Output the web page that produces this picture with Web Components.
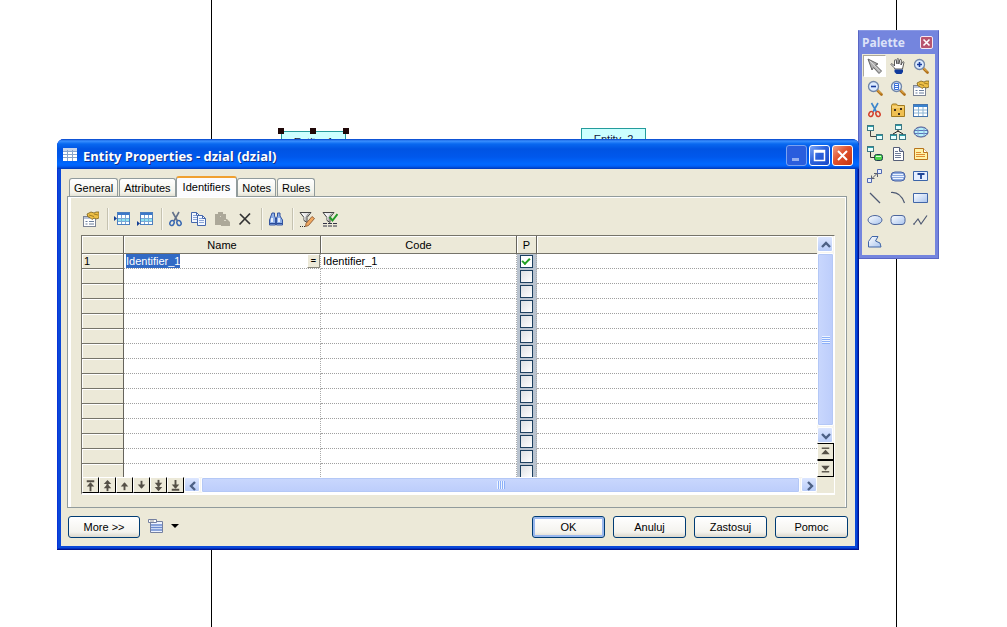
<!DOCTYPE html>
<html lang="pl">
<head>
<meta charset="utf-8">
<title>Entity Properties</title>
<style>
  html, body { margin: 0; height: 100%; }
  body { font: 11px/15px "Liberation Sans", Arial, sans-serif; color: #000; background: #fff; overflow: hidden; }
</style>
</head>
<body>
<diagram-desktop>
  <entity-node class="first" selected>Entity_1</entity-node>
  <entity-node class="second">Entity_2</entity-node>
  <tool-palette heading="Palette"></tool-palette>
  <xp-window heading="Entity Properties - dzial (dzial)">
    <tab-strip tabs="General,Attributes,Identifiers,Notes,Rules" active="Identifiers">
      <tool-bar></tool-bar>
      <identifier-grid></identifier-grid>
    </tab-strip>
    <xp-button slot="left">More &gt;&gt;</xp-button>
    <menu-button slot="left"></menu-button>
    <xp-button slot="right" primary>OK</xp-button>
    <xp-button slot="right">Anuluj</xp-button>
    <xp-button slot="right">Zastosuj</xp-button>
    <xp-button slot="right">Pomoc</xp-button>
  </xp-window>
</diagram-desktop>

<script>
const box = (x, y, w = 6, h = 5) => `<rect x="${x}.5" y="${y}.5" width="${w}" height="${h}" fill="#e8ffff" stroke="#3f7884"/><path d="M${x + 1} ${y + 1}h${w - 1}v1h-${w - 1}z" fill="#28a0a8"/>`;
const lens = inner => `<path d="M10 10l4.500 4.500" stroke="#b07018" stroke-width="2.600" stroke-linecap="round"/><path d="M10.500 10l3.500 3.500" stroke="#f0c060"/><circle cx="6.500" cy="6.500" r="5" fill="#dcebff" stroke="#7186a8" stroke-width="1.300"/>${inner}`;
const props = `<rect x=".5" y="5.500" width="12" height="10" fill="#fff" stroke="#7c8494"/><path d="M1 6h11v2H1z" fill="#b8c2d8"/><path d="M2.500 10.500h2M6 10.500h5M2.500 13h2M6 13h5" stroke="#6b7f9c"/><path d="M4 3l4-2 3 1 2-1h3v6l-3 1-2-1-2 1.500L7 6.500 5 6z" fill="#eebf45" stroke="#79601c" stroke-width=".8"/><path d="M6 4l5 1.500M11 3l4 1" stroke="#8e6e18" stroke-width=".8"/>`;
const funnel = `<path d="M1 1.500h11L8 6.500v5l-3-2v-3z" fill="#e8e8e8" stroke="#444"/><path d="M3 2l3 3.500v3.500" fill="none" stroke="#fff"/><path d="M9.500 2.500L7 6v4" fill="none" stroke="#888"/>`;
const insertTable = marker => `<rect x="3.500" y="1.500" width="12" height="12" fill="#fff" stroke="#4d7fbe"/><path d="M4 2h11v2H4z" fill="#3c78c8"/><path d="M4 8h11v3H4z" fill="#8be4f0"/><path d="M7.500 4v9M11.500 4v9M4 7.500h11M4 10.500h11" stroke="#7aa8d6"/>${marker}`;
const cutter = (blade, ring) => `<path d="M4.500 1l5 9M11 1L6 10" stroke="${blade}" stroke-width="1.600"/><ellipse cx="4" cy="12" rx="2" ry="2.600" transform="rotate(25 4 12)" fill="none" stroke="${ring}" stroke-width="1.500"/><ellipse cx="11" cy="12" rx="2" ry="2.600" transform="rotate(-25 11 12)" fill="none" stroke="${ring}" stroke-width="1.500"/>`;
const defs = `<defs><linearGradient id="f" x1="0" y1="0" x2="1" y2="1"><stop stop-color="#fff"/><stop offset="1" stop-color="#a9c4ee"/></linearGradient></defs>`;
const sheet = (x, y) => `<path d="M${x} ${y}h5l3 3v7h-8z" fill="#f4f8ff" stroke="#4769ad"/><path d="M${x + 5} ${y}v3h3" fill="none" stroke="#4769ad"/><path d="M${x + 1.500} ${y + 3}h3M${x + 1.500} ${y + 5}h5M${x + 1.500} ${y + 7}h5" stroke="#8ba6d8"/>`;

const ICONS = {
  pointer: `<path d="M1 1l10 5-2.500 1 6 6-2.500 2.500-5.500-6L5 12z" fill="#b0b0b0" stroke="#666"/><path d="M3 3l10 10.500" stroke="#ddd"/>`,
  hand: `<path d="M4 9.500L1 6.500c0-1 1-1 1.500-.5L4.500 8V2.500c0-1 1.500-1 1.700 0L7 6V1.500c0-1.200 1.700-1.200 1.800 0V6l1-4c.3-1 1.700-.7 1.600.3L11 7l1.500-3c.5-.8 1.700-.3 1.400.6L12.500 11H5z" fill="#fff" stroke="#333" stroke-width=".8"/><path d="M4.500 11.500h8.500V14l-1.500 2H6.500L4.500 14z" fill="#103a9c"/>`,
  zoomin: lens(`<path d="M4 6.500h5M6.500 4v5" stroke="#173b9c" stroke-width="1.600"/>`),
  zoomout: lens(`<path d="M4 6.500h5" stroke="#173b9c" stroke-width="1.600"/>`),
  zoompage: lens(`<path d="M4.500 3.500h4v6h-4z" fill="#fff" stroke="#3b6fd8"/><path d="M5 5.500h3M5 7.500h3" stroke="#3b6fd8"/>`),
  props,
  cutcolor: cutter('#3c86cc', '#d4402c'),
  folder: `<path d="M1.500 3.500l1-1.500h4l1 1.500h7v11h-13z" fill="#efbf50" stroke="#a07a20"/><path d="M2 5h12" stroke="#ffe59a"/><path d="M4 7h2v2H4zM10 6h2v2h-2zM8 11h2v2H8z" fill="#403020"/>`,
  table: `<rect x=".5" y="2.500" width="14" height="12" fill="#fff" stroke="#4574ac"/><path d="M1 3h13v2H1z" fill="#3a83cf"/><path d="M5.500 5v9M10 5v9M1 8h13M1 11h13" stroke="#8fb6d4"/>`,
  relation: box(0, 1) + box(9, 10) + `<path d="M3.500 7v5.500H9" fill="none" stroke="#444"/>`,
  tree: box(5, 0) + box(0, 10) + box(9, 10) + `<path d="M8 6v2M3 10l5-3 5 3" fill="none" stroke="#222"/>`,
  cylinder: `<ellipse cx="8" cy="8" rx="7" ry="5" fill="#b5f0fa" stroke="#404a8c"/><path d="M2 6.500h12M2 9.500h12" stroke="#5974ba"/><path d="M5 4v8M11 4v8" stroke="#8ba4d0"/>`,
  inherit: box(0, 0) + `<path d="M3.500 6v5.500H8" fill="none" stroke="#333"/><rect x="7.500" y="8.500" width="8" height="6" rx="2" fill="#49d24a" stroke="#203c50"/><path d="M9 10.500h5" stroke="#d8ffe0"/>`,
  document: `<path d="M3.500 1.500h6l4 4v9h-10z" fill="#fff" stroke="#555e78"/><path d="M9.500 1.500v4h4" fill="#c4cee4" stroke="#555e78"/><path d="M5 5.500h3M5 7.500h6M5 9.500h6M5 11.500h6" stroke="#707c98"/>`,
  note: `<path d="M1.500 2.500h9l4 4v7h-13z" fill="#fff3a8" stroke="#b8741c"/><path d="M10.500 2.500v4h4" fill="#fff" stroke="#b8741c"/><path d="M3 6.500h5M3 8.500h9M3 10.500h9" stroke="#e08c30"/>`,
  link: `<path d="M.5 10.500h4v4h-4zM10.500 1.500h4v4h-4z" fill="#e8efff" stroke="#5069b4"/><path d="M5 10.500l5-5M7 5.500h3.500V9M4.500 7.500v3h3" fill="none" stroke="#5a5f70"/>`,
  capsule: `<rect x="1" y="4" width="14" height="9" rx="4" fill="#8eabe0" stroke="#4862a4"/><path d="M3 6.500h10M2 8.500h12M3 10.500h10" stroke="#eef4ff"/>`,
  titlebox: `<path d="M.5 3.500h14v9H.5z" fill="#e5efff" stroke="#3b64a8"/><path d="M4.500 6h7M8 6v5" stroke="#1e4698" stroke-width="1.800"/>`,
  line: `<path d="M3 3l10 10" stroke="#4d5872" stroke-width="1.200"/>`,
  arc: `<path d="M1 2.500C7 2 12 6 14.500 13" fill="none" stroke="#4d5872" stroke-width="1.200"/>`,
  rect: defs + `<path d="M.5 3.500h14v9H.5z" fill="url(#f)" stroke="#4166a8"/>`,
  ellipse: defs + `<ellipse cx="8" cy="8" rx="7" ry="4.500" fill="url(#f)" stroke="#4d669c"/>`,
  rounded: defs + `<rect x="1" y="3.500" width="14" height="9" rx="3" fill="url(#f)" stroke="#4d669c"/>`,
  polyline: `<path d="M1 12l4-5 3 5 6-8.500M1 11v2" fill="none" stroke="#4d5872" stroke-width="1.200"/>`,
  polygon: defs + `<path d="M1.500 13V7.500L5 2.500h6L8.500 7l4.500 2 1 4z" fill="url(#f)" stroke="#4166a8"/>`,
  insertrow: insertTable(`<path d="M0 5v5l3-2.500z" fill="#143e94"/>`),
  addrow: insertTable(`<path d="M0 10v5l3-2.500z" fill="#143e94"/>`),
  cut: cutter('#63718a', '#3868b2'),
  copy: sheet(.5, 1.5) + sheet(6.5, 4.5),
  paste: `<path d="M1 3h3V1h5v2h3v5h1l3 3v4H7v-1H1z" fill="#aca899"/><path d="M6 5h1v1H6zM10 9h2v1h-2z" fill="#d9d6c8"/>`,
  remove: `<path d="M3 3l10 10M13 2.500L2.500 13.500" stroke="#333" stroke-width="1.700"/>`,
  find: `<path d="M4 2h2.500v3l1 2v7H1.500V9zM9.500 2H12v3l2.500 4v5h-6V7l1-2z" fill="#8fb0e8" stroke="#3455a0"/><path d="M4 7v4M11 7v4" stroke="#fff" stroke-width="1.600"/><path d="M2 12.500h5M9 12.500h5M7 7.500h2" stroke="#2a4a98"/>`,
  filteredit: funnel + `<path d="M7 12.500l6-7 2.500 2-6 7-3 1z" fill="#f0a860" stroke="#84502a" stroke-width=".8"/><path d="M1 15.500h1M3 15.500h1M5 15.500h1" stroke="#333"/>`,
  filtercheck: funnel + `<path d="M7.500 6l3 3.500L15.500 3" fill="none" stroke="#239a28" stroke-width="2"/><path d="M1 12.500h4M6 12.500h4M11 12.500h4M1 15h4M6 15h4M11 15h4" stroke="#334"/>`,
  sheet: `<path d="M2.500 3.500h12v11h-12z" fill="#eef3ff" stroke="#7480a0"/><path d="M.5 1.500h8v3h-8z" fill="#fff" stroke="#7480a0"/><path d="M2 3h4" stroke="#999"/><path d="M3 7h11M3 9.500h11M3 12h11" stroke="#6a8ad0" stroke-width="1.400"/>`,
  drop: `<path d="M4 6h8l-4 4z"/>`,
  entity: `<path d="M1 1h14v13H1z" fill="#fff"/><path d="M1 1h14v3H1z" fill="#c8d4ea"/><path d="M5.500 3v11M10.500 3v11M1 4.500h14M1 7.500h14M1 10.500h14" stroke="#89a5cc"/>`,
  first: `<path d="M4 3.500h8M8 14V6" stroke="#555047" stroke-width="2"/><path d="M4 9l4-4.500L12 9z" fill="#555047"/>`,
  pageup: `<path d="M8 14V4" stroke="#555047" stroke-width="2"/><path d="M4 6.500L8 2l4 4.500zM4 11l4-4.500 4 4.500z" fill="#555047"/>`,
  up: `<path d="M8 13V6" stroke="#555047" stroke-width="2"/><path d="M4 9l4-4.500L12 9z" fill="#555047"/>`,
  down: `<path d="M8 3v7" stroke="#555047" stroke-width="2"/><path d="M4 7l4 4.500L12 7z" fill="#555047"/>`,
  pagedown: `<path d="M8 2v10" stroke="#555047" stroke-width="2"/><path d="M4 9.500L8 14l4-4.500zM4 5l4 4.500L12 5z" fill="#555047"/>`,
  last: `<path d="M4 12.500h8M8 2v8" stroke="#555047" stroke-width="2"/><path d="M4 7l4 4.500L12 7z" fill="#555047"/>`,
  splitup: `<path d="M4 4.500h8" stroke="#555047" stroke-width="1.500"/><path d="M3.500 11L8 6l4.500 5z" fill="#555047"/>`,
  splitdown: `<path d="M4 11.500h8" stroke="#555047" stroke-width="1.500"/><path d="M3.500 5L8 10l4.500-5z" fill="#555047"/>`,
  chevup: `<path d="M4 10l4-4 4 4" fill="none" stroke="#4d6185" stroke-width="2.400"/>`,
  chevdown: `<path d="M4 6l4 4 4-4" fill="none" stroke="#4d6185" stroke-width="2.400"/>`,
  chevleft: `<path d="M10 4L6 8l4 4" fill="none" stroke="#4d6185" stroke-width="2.400"/>`,
  chevright: `<path d="M6 4l4 4-4 4" fill="none" stroke="#4d6185" stroke-width="2.400"/>`
};

function define(name, render) {
  customElements.define(name, class extends HTMLElement {
    connectedCallback() {
      if (this.shadowRoot) return;
      this.attachShadow({ mode: 'open' }).innerHTML = render(this);
    }
  });
}

define('ui-icon', el => `
  <style>:host{display:block;width:16px;height:16px;flex:none} svg{display:block;width:100%;height:100%}</style>
  <svg viewBox="0 0 16 16" aria-hidden="true">${ICONS[el.getAttribute('name')]}</svg>`);

define('diagram-desktop', () => `
  <style>
    :host{display:block;position:relative;height:100%;min-height:560px;overflow:hidden;background:#fff}
    .edge{position:absolute;top:0;bottom:0;width:1px;background:#000}
    .edge.a{left:211px} .edge.b{right:110px}
    ::slotted(entity-node){position:absolute}
    ::slotted(.first){left:281px;top:131px}
    ::slotted(.second){left:581px;top:128px}
    ::slotted(tool-palette){position:absolute;right:68px;top:30px}
    ::slotted(xp-window){position:absolute;left:57px;right:148px;top:139px}
  </style>
  <div class="edge a"></div><div class="edge b"></div><slot></slot>`);

define('entity-node', () => `
  <style>
    :host{display:block;box-sizing:border-box;width:65px;height:40px;padding-top:3px;border:1px solid #249c9c;background:#cff;text-align:center;color:#102040}
    .h{display:none;position:absolute;top:-4px;width:6px;height:6px;background:#200808}
    :host([selected]) .h{display:block}
    .l{left:-4px}.m{left:28px}.r{right:-4px}
  </style>
  <slot></slot><i class="h l"></i><i class="h m"></i><i class="h r"></i>`);

define('tool-palette', el => {
  const tools = 'pointer hand zoomin zoomout zoompage props cutcolor folder table relation tree cylinder inherit document note link capsule titlebox line arc rect ellipse rounded polyline polygon'.split(' ');
  return `
  <style>
    :host{display:block;box-sizing:border-box;width:81px;padding:0 3px 3px;background:#7485de;border:1px solid #5966c4;border-top-color:#8b9ae4}
    header{display:flex;align-items:center;justify-content:space-between;height:23px;color:#dce2f8;font:bold 12px/16px "Noto Sans",sans-serif}
    header button{width:13px;height:13px;margin:0 2px 0 0;padding:0;border:1px solid #f4e8f4;border-radius:2px;background:#b8546e;display:grid;place-items:center}
    header svg{width:9px;height:9px}
    .tools{display:grid;grid-template-columns:repeat(3,23px);grid-auto-rows:22px;padding:1px 3px 2px 1px;background:#ece9d8}
    .tools button{display:grid;place-items:center;padding:0;border:0;background:none}
    .tools button[aria-pressed=true]{background:#fff;border:1px solid #aca899;border-right-color:#fff;border-bottom-color:#fff}
  </style>
  <header><span>${el.getAttribute('heading')}</span><button aria-label="Close"><svg viewBox="0 0 9 9"><path d="M1.500 1.500l6 6M7.500 1.500l-6 6" stroke="#fff" stroke-width="1.600"/></svg></button></header>
  <div class="tools">${tools.map((t, i) => `<button aria-label="${t}" aria-pressed="${i === 0}"><ui-icon name="${t}"></ui-icon></button>`).join('')}</div>`;
});

define('xp-window', el => `
  <style>
    :host{display:block;box-sizing:border-box;padding:0 4px 4px;border-radius:7px 7px 0 0;background:#0a48d8;box-shadow:inset -1px -1px #00138c,inset 1px 0 #0831d9,inset -2px -2px #0030c0}
    header{display:flex;align-items:center;height:30px;margin:0 -4px;padding:0 6px 0 5px;box-sizing:border-box;border-radius:7px 7px 0 0;
      background:linear-gradient(#0040c8 0,#3a90ff 2px,#0868f0 5px,#0054e3 10px,#0058ec 18px,#0068ff 25px,#0060f8 27px,#0038b8 30px);color:#fff}
    h1{flex:1;margin:0 0 0 5px;padding-top:4px;font:700 13px/18px "Open Sans",sans-serif;text-shadow:1px 1px #10308c}
    header button{box-sizing:border-box;width:21px;height:21px;margin:3px 0 0 2px;padding:0;border:1px solid #fff;border-radius:3px;background:linear-gradient(135deg,#7fa8f8,#2c62dc 45%,#1848c8);display:grid;place-items:center}
    header button.min{border-color:#7ba2f0;background:#2a5ddd}
    header button.close{background:linear-gradient(135deg,#f0a088,#e0502c 45%,#c43410)}
    header svg{width:17px;height:17px}
    header ui-icon{margin-top:2px}
    main{padding:7px 8px 8px 6px;background:#ece9d8}
    footer{display:flex;justify-content:space-between;padding-top:8px;margin-left:1px;margin-right:-1px}
    footer div{display:flex;gap:8px}
  </style>
  <header>
    <ui-icon name="entity"></ui-icon><h1>${el.getAttribute('heading')}</h1>
    <button class="min" aria-label="Minimize"><svg viewBox="0 0 17 17"><path d="M4 11h7v3H4z" fill="#94aff0"/></svg></button>
    <button aria-label="Maximize"><svg viewBox="0 0 17 17"><path d="M3.500 3.500h10v10h-10zM3 5h11" fill="none" stroke="#fff" stroke-width="1.500"/></svg></button>
    <button class="close" aria-label="Close"><svg viewBox="0 0 17 17"><path d="M4 4l9 9M13 4l-9 9" stroke="#fff" stroke-width="2"/></svg></button>
  </header>
  <main><slot></slot><footer><div><slot name="left"></slot></div><div><slot name="right"></slot></div></footer></main>`);

define('tab-strip', el => {
  const active = el.getAttribute('active');
  return `
  <style>
    :host{display:block}
    nav{display:flex;align-items:flex-end;height:20px;padding-left:2px}
    button{box-sizing:border-box;height:18px;margin:0 1px 0 0;padding:0 4px;border:1px solid #919b9c;border-bottom:0;border-radius:3px 3px 0 0;background:linear-gradient(#fff,#f2f2ea 80%,#e4e2d4);font:inherit;line-height:18px;color:#000}
    button[aria-selected=true]{position:relative;height:21px;margin:0 0 -1px -1px;padding:0 6px 2px;border-top:2px solid #f0a030;background:#fcfcfe;line-height:16px}
    .panel{padding:11px 11px 12px 13px;border:1px solid #919b9c;box-shadow:inset 3px 0 #fff,inset -1px 0 #fff,inset 0 1px #fff}
  </style>
  <nav role="tablist">${el.getAttribute('tabs').split(',').map(t => `<button role="tab" aria-selected="${t === active}">${t}</button>`).join('')}</nav>
  <div class="panel" role="tabpanel"><slot></slot></div>`;
});

define('tool-bar', () => {
  const groups = ['props', 'insertrow addrow', 'cut copy paste remove', 'find', 'filteredit filtercheck'];
  return `
  <style>
    :host{display:flex;align-items:center;height:22px;margin:0 0 5px -4px}
    .group{display:flex;padding:0 5px 0 2px} .group+.group{border-left:1px solid #c5c2b0;box-shadow:inset 1px 0 #f8f7f0}
    button{width:23px;height:22px;margin:0;padding:0;border:0;background:none;display:grid;place-items:center}
  </style>
  ${groups.map(g => `<div class="group">${g.split(' ').map(n => `<button aria-label="${n}"><ui-icon name="${n}"></ui-icon></button>`).join('')}</div>`).join('')}`;
});

define('scroll-bar', el => {
  const v = el.hasAttribute('vertical');
  return `
  <style>
    :host{display:flex;flex:1;min-width:0;min-height:0;background:#f6f5f0;gap:1px;flex-direction:${v ? 'column' : 'row'}}
    button{box-sizing:border-box;flex:none;width:16px;height:${v ? 16 : 15}px;padding:0;border:1px solid #fff;border-radius:2px;background:linear-gradient(#dce6ff,#b8ccf8);display:grid;place-items:center;overflow:hidden}
    .thumb{flex:1;display:grid;place-items:center;box-sizing:border-box;border:1px solid #fff;border-radius:2px;box-shadow:inset 0 0 0 1px #b4c8f6;background:linear-gradient(${v ? '90deg' : '180deg'},#c9d7fd,#bccdfb)}
    .grip{width:8px;height:8px;background:repeating-linear-gradient(${v ? '180deg' : '90deg'},#eef4fe 0 1px,#8cb0f8 1px 2px)}
  </style>
  <button aria-label="Back"><ui-icon name="${v ? 'chevup' : 'chevleft'}"></ui-icon></button>
  <div class="thumb"><div class="grip"></div></div>
  <button aria-label="Forward"><ui-icon name="${v ? 'chevdown' : 'chevright'}"></ui-icon></button>`;
});

define('identifier-grid', () => {
  const row = i => `<tr><th scope="row">${i ? '' : '1'}</th>
    <td>${i ? '' : '<div class="edit"><input class="name" aria-label="Name" value="Identifier_1"><button aria-label="Copy code from name">=</button></div>'}</td>
    <td>${i ? '' : 'Identifier_1'}</td>
    <td class="flag"><input type="checkbox" aria-label="Primary, row ${i + 1}"${i ? '' : ' checked'}></td><td></td></tr>`;
  return `
  <style>
    :host{display:grid;grid-template-columns:1fr 17px;border:1px solid #76746a;border-right-color:#fff;border-bottom:2px solid #fff}
    .view{height:241px;overflow:hidden;background:#fff}
    table{width:100%;table-layout:fixed;border-collapse:separate;border-spacing:0}
    .c1{width:42px}.c2{width:197px}.c3{width:196px}.c4{width:20px}
    th,td{box-sizing:border-box;padding:0;height:15px;line-height:14px;font-weight:normal;text-align:left;overflow:hidden}
    th{background:#ece9d8;border-right:1px solid #66645c;border-bottom:1px solid #76746a;box-shadow:inset 1px 1px #fff}
    thead th{height:18px;padding-top:2px;line-height:15px;text-align:center}
    thead th:last-child{border-right:0}
    tbody th{padding-left:2px}
    td{padding-left:2px;border-right:1px dotted #aaa;border-bottom:1px dotted #a0a0a0}
    td:last-child{border-right:0}
    .edit{display:flex;justify-content:space-between;height:14px}
    .name{box-sizing:border-box;width:54px;height:14px;margin:0;padding:0;border:0;background:#316ac5;color:#fff;font:inherit;line-height:14px}
    .edit button{box-sizing:border-box;width:13px;height:14px;padding:0;border:1px solid #fff;border-right-color:#8a887c;border-bottom-color:#8a887c;background:#ece9d8;font:bold 9px/11px "Liberation Sans",sans-serif}
    .flag{padding:0 0 0 3px;background:#b9c3cf;border-bottom-color:#b9c3cf}
    .flag input{appearance:none;display:block;box-sizing:border-box;width:13px;height:13px;margin:0;border:1px solid #1c4060;background:linear-gradient(135deg,#dce0e4,#fff)}
    .flag input:checked{background:#fff}
    .flag input:checked::before{content:"";display:block;box-sizing:border-box;width:8px;height:5px;margin:2px 0 0 1px;border:solid #21a121;border-width:0 0 2px 2px;transform:rotate(-45deg)}
    .side{display:flex;flex-direction:column;background:#ece9d8}
    .foot{display:flex;height:16px;background:#f6f5f0}
    .nav{box-sizing:border-box;width:17px;height:17px;margin:0;padding:0;border:1px solid #fff;border-right-color:#000;border-bottom-color:#000;background:#ece9d8;display:grid;place-items:center;overflow:hidden;flex:none}
    .foot .nav{height:16px}
    .side .nav{border-top-color:#000}
    .nav ui-icon{width:15px;height:15px}
    .corner{background:#ece9d8}
  </style>
  <div class="view"><table>
    <colgroup><col class="c1"><col class="c2"><col class="c3"><col class="c4"><col></colgroup>
    <thead><tr><th></th><th scope="col">Name</th><th scope="col">Code</th><th scope="col">P</th><th></th></tr></thead>
    <tbody>${Array.from({ length: 15 }, (_, i) => row(i)).join('')}</tbody></table></div>
  <div class="side"><scroll-bar vertical></scroll-bar><button class="nav" aria-label="Split up"><ui-icon name="splitup"></ui-icon></button><button class="nav" aria-label="Split down"><ui-icon name="splitdown"></ui-icon></button></div>
  <div class="foot">${['first', 'pageup', 'up', 'down', 'pagedown', 'last'].map(n => `<button class="nav" aria-label="${n}"><ui-icon name="${n}"></ui-icon></button>`).join('')}<scroll-bar></scroll-bar></div>
  <div class="corner"></div>`;
});

define('xp-button', () => `
  <style>
    :host{display:block;width:73px}
    :host([slot=left]){width:72px}
    button{box-sizing:border-box;width:100%;height:22px;margin:0;padding:0;border:1px solid #003c74;border-radius:3px;background:linear-gradient(#fff,#f4f3ee 75%,#dcd8cc);font:inherit;line-height:20px;color:#000}
    :host([primary]) button{box-shadow:inset 0 0 0 2px #9ab8ee}
  </style>
  <button><slot></slot></button>`);

define('menu-button', () => `
  <style>:host{display:block} button{display:flex;align-items:center;height:20px;margin:0;padding:0;border:0;background:none;gap:3px}</style>
  <button aria-label="Report"><ui-icon name="sheet"></ui-icon><ui-icon name="drop"></ui-icon></button>`);
</script>
</body>
</html>
